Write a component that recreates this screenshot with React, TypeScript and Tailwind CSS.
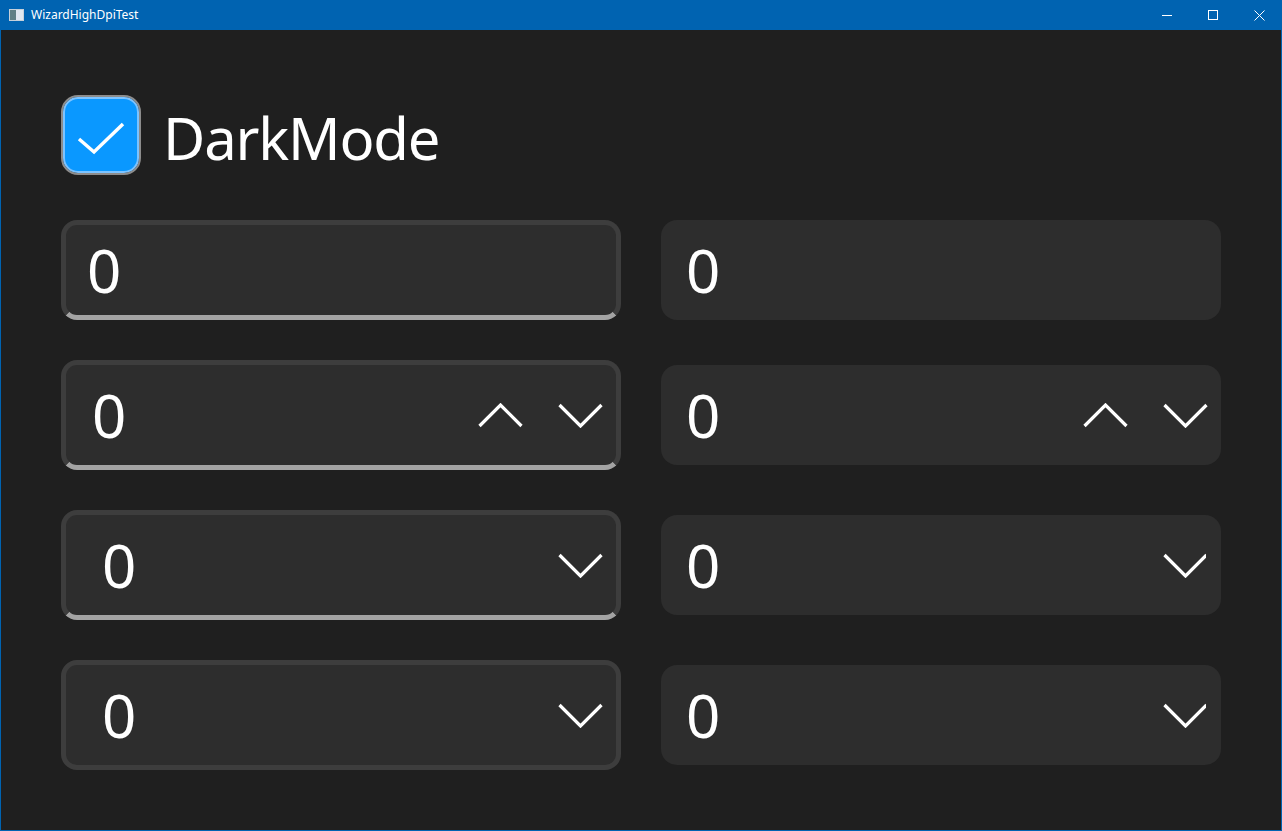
import React from 'react';

const font = "font-['Segoe_UI','Noto_Sans','Open_Sans',sans-serif]";

function Chevron({ up = false, clip = false }: { up?: boolean; clip?: boolean }) {
  return (
    <svg width={clip ? 43 : 45} height="25" viewBox={clip ? '0 0 43 25' : '0 0 45 25'} className="shrink-0">
      <polyline
        points={up ? '1.5,23 22.5,2 43.5,23' : '1.5,2 22.5,23 43.5,2'}
        fill="none"
        stroke="white"
        strokeWidth="3.2"
      />
    </svg>
  );
}

function Value({ pad }: { pad: string }) {
  return <span className={`text-[60px] leading-none text-white ${pad}`}>0</span>;
}

export default function App() {
  return (
    <div className={`w-[1282px] h-[831px] bg-[#0063b1] flex flex-col ${font}`}>
      {/* title bar */}
      <div className="h-[30px] flex items-center shrink-0">
        <div className="ml-[9px] w-[15px] h-[12px] bg-[#dfe7ef] border border-[#c6d0da] flex">
          <div className="w-[6px] h-full bg-[#5f7f84]" />
        </div>
        <span className="ml-[7px] text-[12px] text-white">WizardHighDpiTest</span>
        <div className="ml-auto flex items-center h-full">
          <div className="w-[46px] h-full flex items-center justify-center">
            <div className="w-[10px] h-[1px] bg-white" />
          </div>
          <div className="w-[46px] h-full flex items-center justify-center">
            <div className="w-[10px] h-[10px] border border-white" />
          </div>
          <div className="w-[46px] h-full flex items-center justify-center">
            <svg width="11" height="11" viewBox="0 0 11 11">
              <path d="M0.5 0.5 L10.5 10.5 M10.5 0.5 L0.5 10.5" stroke="white" strokeWidth="1" />
            </svg>
          </div>
        </div>
      </div>

      {/* content */}
      <div className="flex-1 mx-[1px] mb-[1px] bg-[#1f1f1f] pl-[60px] pt-[65px]">
        <div className="flex items-center gap-[22px] h-[80px]">
          <div className="w-[80px] h-[80px] rounded-[17px] border-[2px] border-[#8c8c8c] p-0">
            <div className="w-full h-full rounded-[15px] border-[2px] border-[#7cc3ff] bg-[#0a98ff] relative">
              <svg width="76" height="76" viewBox="0 0 76 76" className="absolute -left-[2px] -top-[2px]">
                <polyline points="16,42 31,55 60,27" fill="none" stroke="white" strokeWidth="3.5" />
              </svg>
            </div>
          </div>
          <span className="text-[58px] leading-none text-white tracking-[-1.2px] mt-[5px]">DarkMode</span>
        </div>

        <div className="mt-[45px] grid grid-cols-[560px_560px] gap-x-[40px] gap-y-[40px] items-center">
          {/* row 1 */}
          <div className="h-[100px] rounded-[16px] border-[5px] border-[#3d3d3d] border-b-[#a3a3a3] bg-[#2d2d2d] flex items-center">
            <Value pad="pl-[21px]" />
          </div>
          <div className="h-[100px] rounded-[16px] bg-[#2d2d2d] flex items-center">
            <Value pad="pl-[25px]" />
          </div>

          {/* row 2 */}
          <div className="h-[110px] rounded-[16px] border-[5px] border-[#3d3d3d] border-b-[#a3a3a3] bg-[#2d2d2d] flex items-center pr-[13px]">
            <Value pad="pl-[26px]" />
            <div className="ml-auto flex items-center gap-[35px]">
              <Chevron up />
              <Chevron />
            </div>
          </div>
          <div className="h-[100px] rounded-[16px] bg-[#2d2d2d] flex items-center pr-[13px]">
            <Value pad="pl-[25px]" />
            <div className="ml-auto flex items-center gap-[35px]">
              <Chevron up />
              <Chevron />
            </div>
          </div>

          {/* row 3 */}
          <div className="h-[110px] rounded-[16px] border-[5px] border-[#3d3d3d] border-b-[#a3a3a3] bg-[#2d2d2d] flex items-center pr-[13px]">
            <Value pad="pl-[36px]" />
            <div className="ml-auto">
              <Chevron />
            </div>
          </div>
          <div className="h-[100px] rounded-[16px] bg-[#2d2d2d] flex items-center pr-[15px]">
            <Value pad="pl-[25px]" />
            <div className="ml-auto">
              <Chevron clip />
            </div>
          </div>

          {/* row 4 */}
          <div className="h-[110px] rounded-[16px] border-[5px] border-[#3d3d3d] bg-[#2d2d2d] flex items-center pr-[13px]">
            <Value pad="pl-[36px]" />
            <div className="ml-auto">
              <Chevron />
            </div>
          </div>
          <div className="h-[100px] rounded-[16px] bg-[#2d2d2d] flex items-center pr-[15px]">
            <Value pad="pl-[25px]" />
            <div className="ml-auto">
              <Chevron clip />
            </div>
          </div>
        </div>
      </div>
    </div>
  );
}
